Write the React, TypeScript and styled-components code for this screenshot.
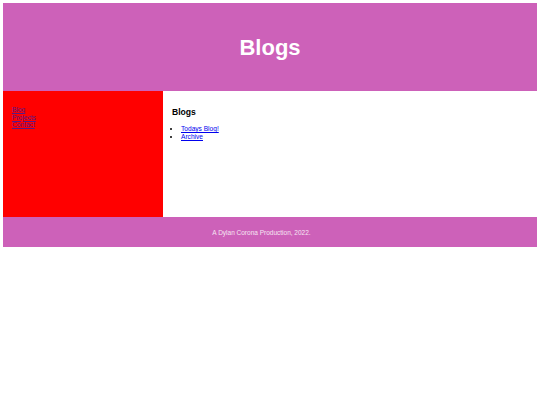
import styled, { createGlobalStyle } from "styled-components";

const GlobalStyle = createGlobalStyle`
  body {
    margin: 3px;
    font-family: "Liberation Sans", Arial, sans-serif;
    background: #ffffff;
  }
`;

const StyledPage = styled.div`
  width: 534px;
  display: flex;
  flex-direction: column;
`;

const StyledHeader = styled.header`
  height: 88px;
  padding-top: 2px;
  box-sizing: border-box;
  background: #cd61b9;
  display: flex;
  align-items: center;
  justify-content: center;
`;

const StyledTitle = styled.h1`
  margin: 0;
  color: #ffffff;
  font-size: 22px;
  font-weight: bold;
`;

const StyledBody = styled.div`
  display: flex;
  height: 126px;
`;

const StyledSidebar = styled.nav`
  width: 160px;
  flex-shrink: 0;
  background: #ff0000;
  padding: 15px 9px;
  box-sizing: border-box;
  display: flex;
  flex-direction: column;
`;

const StyledNavLink = styled.a`
  font-size: 6.6px;
  line-height: 7.6px;
  color: #551a8b;
  width: fit-content;
`;

const StyledMain = styled.main`
  flex: 1;
  padding: 16px 9px;
  box-sizing: border-box;
`;

const StyledHeading = styled.h2`
  margin: 0 0 8px;
  font-size: 8.6px;
  line-height: 10px;
  font-weight: bold;
  color: #000000;
`;

const StyledList = styled.ul`
  margin: 0;
  padding-left: 9px;
  font-size: 6.6px;
  line-height: 8px;
`;

const StyledListLink = styled.a`
  color: #0000ee;
`;

const StyledFooter = styled.footer`
  height: 30px;
  padding: 1px 17px 0 0;
  box-sizing: border-box;
  background: #cd61b9;
  display: flex;
  align-items: center;
  justify-content: center;
  color: #f6e6f3;
  font-size: 6.5px;
`;

export default function App() {
  return (
    <>
      <GlobalStyle />
      <StyledPage>
        <StyledHeader>
          <StyledTitle>Blogs</StyledTitle>
        </StyledHeader>
        <StyledBody>
          <StyledSidebar>
            <StyledNavLink href="#">Blog</StyledNavLink>
            <StyledNavLink href="#">Projects</StyledNavLink>
            <StyledNavLink href="#">Contact</StyledNavLink>
          </StyledSidebar>
          <StyledMain>
            <StyledHeading>Blogs</StyledHeading>
            <StyledList>
              <li>
                <StyledListLink href="#">Todays Blog!</StyledListLink>
              </li>
              <li>
                <StyledListLink href="#">Archive</StyledListLink>
              </li>
            </StyledList>
          </StyledMain>
        </StyledBody>
        <StyledFooter>A Dylan Corona Production, 2022.</StyledFooter>
      </StyledPage>
    </>
  );
}
